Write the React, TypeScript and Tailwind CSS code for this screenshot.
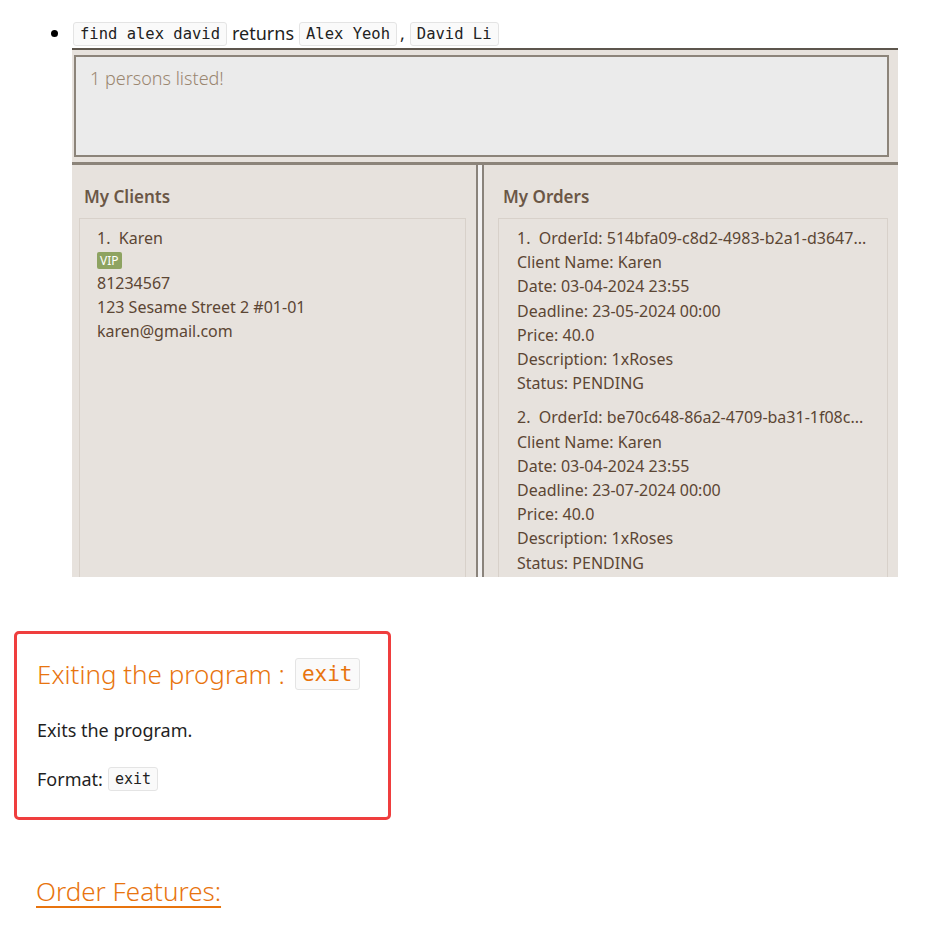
import React from "react";

const font = { fontFamily: '"Noto Sans", "Open Sans", sans-serif' };

function Code({ children, className = "" }: { children: React.ReactNode; className?: string }) {
  return (
    <code
      className={`inline-block rounded-[3px] border border-[#e4e4e4] bg-[#fafafa] px-[6px] text-[#222] ${className}`}
      style={{ fontFamily: '"DejaVu Sans Mono", "Liberation Mono", monospace' }}
    >
      {children}
    </code>
  );
}

const order1 = [
  "Client Name: Karen",
  "Date: 03-04-2024 23:55",
  "Deadline: 23-05-2024 00:00",
  "Price: 40.0",
  "Description: 1xRoses",
  "Status: PENDING",
];
const order2 = [
  "Client Name: Karen",
  "Date: 03-04-2024 23:55",
  "Deadline: 23-07-2024 00:00",
  "Price: 40.0",
  "Description: 1xRoses",
  "Status: PENDING",
];

export default function App() {
  return (
    <div className="min-h-[927px] w-[934px] bg-white text-[#1f1f1f]" style={font}>
      <div className="pt-[20px]">
        <div className="flex items-center pl-[51px]">
          <span className="mr-[15px] inline-block h-[7px] w-[7px] rounded-full bg-black" />
          <div className="flex items-center gap-[5px] text-[18px]">
            <Code className="text-[15.5px] leading-[22px]">find alex david</Code>
            <span>returns</span>
            <Code className="text-[15.5px] leading-[22px]">Alex Yeoh</Code>
            <span className="-ml-[2px]">,</span>
            <Code className="text-[15.5px] leading-[22px]">David Li</Code>
          </div>
        </div>

        <div className="ml-[72px] mt-[1px] flex h-[529px] w-[826px] flex-col overflow-hidden border-t-2 border-[#5d564d] bg-[#e7e2dd]">
          <div className="ml-[2px] mr-[9px] mt-[5px] h-[102px] shrink-0 border-2 border-[#8c847a] bg-[#ebebeb] px-[14px] pt-[8px]">
            <span className="text-[18px] font-light text-[#9a8670]">1 persons listed!</span>
          </div>
          <div className="mt-[5px] shrink-0 border-t-[3px] border-[#8c847a]" />
          <div className="flex min-h-0 flex-1">
            <div className="w-[406px] border-r-2 border-[#8a837b] pl-[7px] pr-[10px]">
              <div className="pl-[5px] pt-[20px] text-[17px] font-semibold leading-[24px] text-[#6b5746]">My Clients</div>
              <div className="mt-[9px] h-[400px] border border-[#d8d1ca] pl-[17px] pt-[7px] text-[16px] leading-[24px] text-[#5c4634]">
                <div>1.&nbsp; Karen</div>
                <div className="flex h-[21px] items-center">
                  <span className="rounded-[2px] bg-[#8ea361] px-[3px] text-[12px] leading-[17px] text-white">VIP</span>
                </div>
                <div>81234567</div>
                <div>123 Sesame Street 2 #01-01</div>
                <div>karen@gmail.com</div>
              </div>
            </div>
            <div className="w-[6px] border-r-2 border-[#8a837b] bg-[#f3f2f2]" />
            <div className="flex-1 pl-[14px] pr-[10px]">
              <div className="pl-[5px] pt-[20px] text-[17px] font-semibold leading-[24px] text-[#6b5746]">My Orders</div>
              <div className="mt-[9px] h-[400px] border border-[#d8d1ca] pl-[18px] pt-[7px] text-[16px] leading-[24.2px] text-[#5c4634]">
                <div className="whitespace-nowrap">1.&nbsp; OrderId: 514bfa09-c8d2-4983-b2a1-d3647...</div>
                {order1.map((l) => (
                  <div key={"a" + l}>{l}</div>
                ))}
                <div className="mt-[10px] whitespace-nowrap">2.&nbsp; OrderId: be70c648-86a2-4709-ba31-1f08c...</div>
                {order2.map((l) => (
                  <div key={"b" + l}>{l}</div>
                ))}
              </div>
            </div>
          </div>
        </div>

        <div className="ml-[14px] mt-[54px] w-[377px] rounded-[5px] border-[3px] border-[#ef3e3e] pb-[25px] pl-[20px] pr-[8px] pt-[22px]">
          <div className="flex items-center gap-[10px] whitespace-nowrap text-[26px] font-light leading-[36px] text-[#e8740e]">
            <span>Exiting the program :</span>
            <Code className="!text-[#e8740e] text-[21px] leading-[30px]">exit</Code>
          </div>
          <div className="mt-[25px] text-[18px] leading-[26px]">Exits the program.</div>
          <div className="mt-[23px] flex items-center gap-[5px] text-[18px] leading-[26px]">
            <span>Format:</span>
            <Code className="text-[15px] leading-[22px]">exit</Code>
          </div>
        </div>

        <div className="ml-[36px] mt-[53px] text-[26px] font-light leading-[36px] text-[#e8740e] underline decoration-[2px] underline-offset-[5px]">
          Order Features:
        </div>
      </div>
    </div>
  );
}
